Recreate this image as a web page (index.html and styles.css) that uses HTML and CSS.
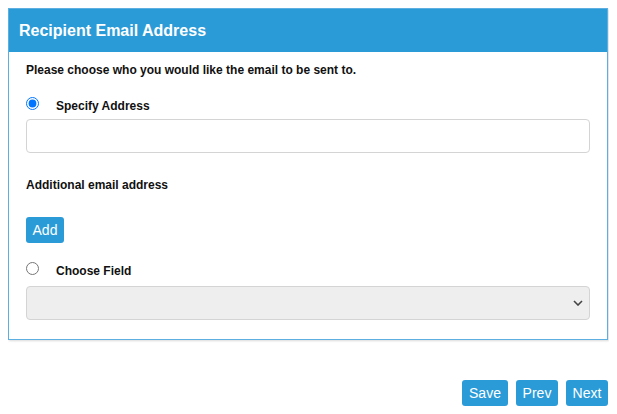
FILE: index.html
```html
<!DOCTYPE html>
<html lang="en">
<head>
    <meta charset="UTF-8">
    <title>Recipient Email Address</title>
    <link rel="stylesheet" href="styles.css">
</head>
<body>
    <div class="panel">
        <div class="panel-head">Recipient Email Address</div>
        <div class="panel-body">
            <p class="intro">Please choose who you would like the email to be sent to.</p>

            <label class="choice">
                <input type="radio" name="target" checked>
                <span>Specify Address</span>
            </label>
            <input class="field" type="text">

            <p class="sub">Additional email address</p>
            <button class="btn add">Add</button>

            <label class="choice second">
                <input type="radio" name="target">
                <span>Choose Field</span>
            </label>
            <div class="select">
                <svg width="10" height="6" viewBox="0 0 10 6"><path d="M1 1l4 4 4-4" fill="none" stroke="#444" stroke-width="1.6"/></svg>
            </div>
        </div>
    </div>

    <!-- wizard nav -->
    <div class="nav">
        <button class="btn save">Save</button>
        <button class="btn">Prev</button>
        <button class="btn">Next</button>
    </div>
</body>
</html>
```

FILE: styles.css
```css
body {
    margin: 8px;
    font-family: "Liberation Sans", Arial, sans-serif;
    color: #111;
}

.panel {
    width: 598px;
    border: 1px solid #5cafe0;
    box-shadow: 1px 1px 2px rgba(0,0,0,.15);
}

.panel-head {
    background: #2b9bd8;
    color: #fff;
    font-weight: bold;
    font-size: 16px;
    height: 43px;
    line-height: 43px;
    padding-left: 10px;
}

.panel-body {
    padding: 10px 17px 19px;
}

.intro {
    margin: 0;
    font-size: 12px;
    font-weight: bold;
    line-height: 16px;
}

.choice {
    display: flex;
    align-items: center;
    margin-top: 18px;
    height: 20px;
    font-size: 12px;
    font-weight: bold;
}

.choice input {
    margin: 0 17px 0 0;
    width: 13px;
    height: 13px;
    position: relative;
    top: -3px;
}

.choice.second {
    margin-top: 18px;
}

.field {
    display: block;
    box-sizing: border-box;
    width: 564px;
    height: 34px;
    margin-top: 3px;
    border: 1px solid #d4d4d4;
    border-radius: 4px;
}

.sub {
    margin: 24px 0 0;
    font-size: 12px;
    font-weight: bold;
    line-height: 16px;
}

.btn {
    background: #2b9bd8;
    color: #fff;
    border: none;
    border-radius: 3px;
    font-family: "Liberation Sans", Arial, sans-serif;
    font-size: 14px;
    height: 26px;
    padding: 0;
}

.add {
    display: block;
    margin-top: 24px;
    width: 38px;
}

.select {
    box-sizing: border-box;
    width: 564px;
    height: 34px;
    margin-top: 5px;
    background: #eee;
    border: 1px solid #d4d4d4;
    border-radius: 4px;
    display: flex;
    align-items: center;
    justify-content: flex-end;
    padding-right: 6px;
}

.nav {
    width: 600px;
    margin-top: 40px;
    display: flex;
    justify-content: flex-end;
    gap: 8px;
}

.nav .btn {
    width: 42px;
}

.nav .save {
    width: 46px;
}
```
